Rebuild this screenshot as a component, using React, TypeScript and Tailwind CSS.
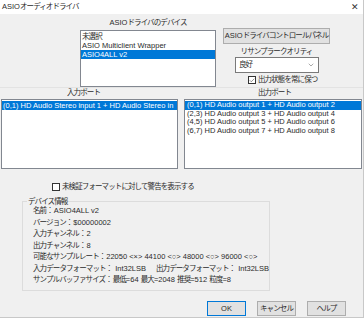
import React from 'react';
import { ChevronDown, Check } from 'lucide-react';

const J: React.FC<{ children: React.ReactNode; className?: string }> = ({ children, className }) => (
  <span className={`tracking-[-0.9px] ${className ?? ''}`}>{children}</span>
);

const Checkbox: React.FC<{ checked?: boolean }> = ({ checked }) => (
  <span className="w-[8px] h-[8px] border border-[#333333] bg-white flex items-center justify-center shrink-0">
    {checked && <Check size={7} strokeWidth={2} className="text-[#333333]" />}
  </span>
);

const Btn: React.FC<{ children: React.ReactNode; primary?: boolean }> = ({ children, primary }) => (
  <button
    className={`w-[39px] h-[15px] bg-[#e1e1e1] border flex items-center justify-center ${
      primary ? 'border-[#0078d7]' : 'border-[#adadad]'
    }`}
  >
    {children}
  </button>
);

const outputs = [
  '(0,1) HD Audio output 1 + HD Audio output 2',
  '(2,3) HD Audio output 3 + HD Audio output 4',
  '(4,5) HD Audio output 5 + HD Audio output 6',
  '(6,7) HD Audio output 7 + HD Audio output 8',
];

const App: React.FC = () => {
  return (
    <div
      className="w-[364px] h-[318px] bg-[#f0f0f0] text-[7.5px] text-[#2b2b2b] overflow-hidden border-r border-b border-[#c8c8c8] flex flex-col"
      style={{ fontFamily: '"Liberation Sans", "Noto Sans CJK JP", sans-serif' }}
    >
      {/* Title bar */}
      <div className="h-[14px] bg-white flex items-center justify-between pl-[2px] pr-[4px] shrink-0">
        <span>
          ASIO<J>オーディオドライバ</J>
        </span>
        <span className="text-[9px] leading-none text-[#333]">✕</span>
      </div>

      {/* Driver device + control panel */}
      <div className="h-[74px] flex shrink-0 border-b border-[#e3e3e3]">
        <div className="ml-[80px] w-[136px] flex flex-col">
          <div className="mt-[5px] h-[8px] leading-[8px] text-center">
            ASIO<J>ドライバのデバイス</J>
          </div>
          <div className="mt-[3px] h-[57px] bg-white border border-[#828790] leading-[9px] pt-[1px]">
            <div className="px-[1px]">
              <J>未選択</J>
            </div>
            <div className="px-[1px]">ASIO Multiclient Wrapper</div>
            <div className="px-[1px] bg-[#0078d7] text-white">ASIO4ALL v2</div>
          </div>
        </div>

        <div className="ml-[7px] w-[107px] flex flex-col">
          <div className="mt-[14px] h-[16px] bg-[#e1e1e1] border border-[#adadad] flex items-center justify-center">
            ASIO<J>ドライバコントロールパネル</J>
          </div>
          <div className="mt-[4px] h-[8px] leading-[8px] text-center">
            <J>リサンプラークオリティ</J>
          </div>
          <div className="mt-[1px] ml-[12px] w-[84px] h-[16px] bg-white border border-[#7a7a7a] flex items-center justify-between pl-[3px] pr-[3px]">
            <J>良好</J>
            <ChevronDown size={8} strokeWidth={1.5} className="text-[#555]" />
          </div>
          <div className="mt-[3px] ml-[25px] h-[8px] flex items-center gap-[2px]">
            <Checkbox checked />
            <J>出力状態を常に保つ</J>
          </div>
        </div>
      </div>

      {/* Ports */}
      <div className="flex shrink-0">
        <div className="ml-[1px] w-[177px] flex flex-col">
          <div className="mt-[1px] h-[8px] leading-[8px] pl-[66px]">
            <J>入力ポート</J>
          </div>
          <div className="mt-[2px] h-[70px] bg-white border border-[#828790] pt-[1px] leading-[9px] overflow-hidden">
            <div className="bg-[#0078d7] text-white whitespace-nowrap overflow-hidden px-[1px]">
              (0,1) HD Audio Stereo input 1 + HD Audio Stereo in
            </div>
          </div>
        </div>
        <div className="ml-[6px] w-[178px] flex flex-col">
          <div className="mt-[1px] h-[8px] leading-[8px] pl-[74px]">
            <J>出力ポート</J>
          </div>
          <div className="mt-[2px] h-[70px] bg-white border border-[#828790] pt-[1px] leading-[8.5px]">
            {outputs.map((o, i) => (
              <div
                key={o}
                className={`px-[2px] whitespace-nowrap ${i === 0 ? 'bg-[#0078d7] text-white' : ''}`}
              >
                {o}
              </div>
            ))}
          </div>
        </div>
      </div>

      {/* Warning checkbox */}
      <div className="mt-[14px] ml-[52px] h-[8px] flex items-center gap-[2px] shrink-0">
        <Checkbox />
        <J>未検証フォーマットに対して警告を表示する</J>
      </div>

      {/* Device info group */}
      <div className="relative mt-[10px] ml-[22px] w-[248px] h-[90px] border border-[#dcdcdc] shrink-0">
        <div className="absolute -top-[5px] left-[4px] bg-[#f0f0f0] px-[1px] leading-[9px]">
          <J>デバイス情報</J>
        </div>
        <div className="pt-[3px] pl-[10px] leading-[11.5px] whitespace-nowrap">
          <div>
            <J>名前</J>：ASIO4ALL v2
          </div>
          <div>
            <J>バージョン</J>：$00000002
          </div>
          <div>
            <J>入力チャンネル</J>：2
          </div>
          <div>
            <J>出力チャンネル</J>：8
          </div>
          <div>
            <J>可能なサンプルレート</J>：22050 &lt;×&gt; 44100 &lt;○&gt; 48000 &lt;○&gt; 96000 &lt;○&gt;
          </div>
          <div className="flex">
            <div className="w-[129px]">
              <J>入力データフォーマット</J>： Int32LSB
            </div>
            <div>
              <J>出力データフォーマット</J>： Int32LSB
            </div>
          </div>
          <div>
            <J>サンプルバッファサイズ</J>：<J>最低</J>=64 <J>最大</J>=2048 <J>推奨</J>=512 <J>粒度</J>=8
          </div>
        </div>
      </div>

      {/* Buttons */}
      <div className="mt-[10px] ml-[207px] flex gap-[11px] shrink-0">
        <Btn primary>OK</Btn>
        <Btn>
          <J>キャンセル</J>
        </Btn>
        <Btn>
          <J>ヘルプ</J>
        </Btn>
      </div>
    </div>
  );
};

export default App;
